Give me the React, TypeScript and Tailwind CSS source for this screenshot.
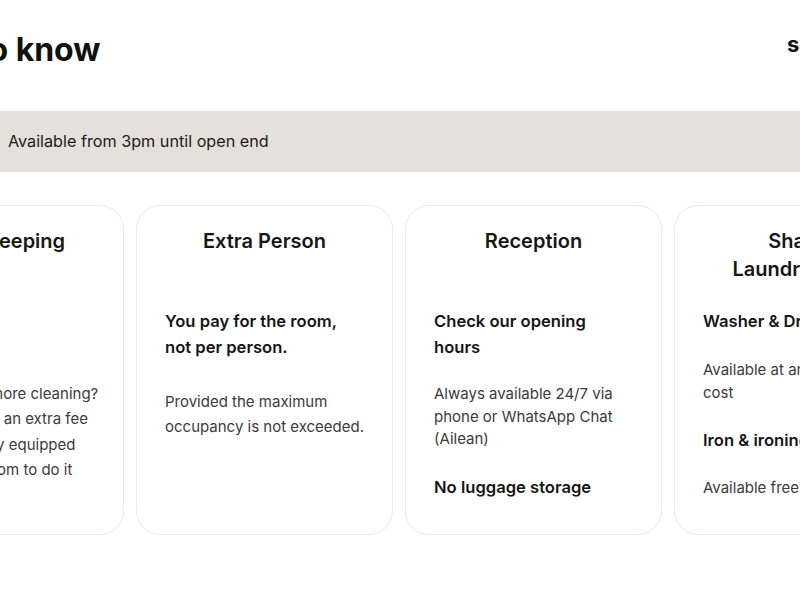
import type { ReactNode } from 'react';

type Block = { kind: 'strong' | 'text'; lines?: string[]; body?: ReactNode; className: string };

type Card = { title: ReactNode; blocks: Block[] };

const cards: Card[] = [
  {
    title: 'Housekeeping',
    blocks: [
      { kind: 'strong', body: 'Included', className: 'leading-[26px]' },
      {
        kind: 'text',
        lines: [
          'Do you need more cleaning?',
          'Available upon an extra fee',
          'Or you are fully equipped',
          'in your own room to do it',
        ],
        className: 'mt-[47px] leading-[25.3px]',
      },
    ],
  },
  {
    title: 'Extra Person',
    blocks: [
      {
        kind: 'strong',
        body: (
          <>
            You pay for the room,
            <br />
            not per person.
          </>
        ),
        className: 'leading-[26px]',
      },
      {
        kind: 'text',
        body: 'Provided the maximum occupancy is not exceeded.',
        className: 'mt-[29px] leading-[25px]',
      },
    ],
  },
  {
    title: 'Reception',
    blocks: [
      {
        kind: 'strong',
        body: (
          <>
            Check our opening
            <br />
            hours
          </>
        ),
        className: 'leading-[26px]',
      },
      {
        kind: 'text',
        body: 'Always available 24/7 via phone or WhatsApp Chat (Ailean)',
        className: 'mt-[23px] leading-[22.5px]',
      },
      { kind: 'strong', body: 'No luggage storage', className: 'mt-[23px] leading-[26px]' },
    ],
  },
  {
    title: (
      <>
        Shared
        <br />
        Laundry Room
      </>
    ),
    blocks: [
      { kind: 'strong', body: 'Washer & Dryer', className: 'leading-[26px]' },
      {
        kind: 'text',
        body: 'Available at an additional cost',
        className: 'mt-[25px] leading-[22.5px]',
      },
      { kind: 'strong', body: 'Iron & ironing board', className: 'mt-[23px] leading-[26px]' },
      { kind: 'text', body: 'Available free of charge', className: 'mt-[24px] leading-[22.5px]' },
    ],
  },
];

function InfoCard({ card }: { card: Card }) {
  return (
    <div className="w-[257px] h-[330px] shrink-0 rounded-[24px] border border-[#ebebeb] bg-white pl-7 pr-6 pt-[21px]">
      <h3 className="h-14 pr-1 text-center text-[20px] font-semibold leading-7 text-[#161616]">{card.title}</h3>
      <div className="mt-[25px]">
        {card.blocks.map((b, i) =>
          b.kind === 'strong' ? (
            <p key={i} className={`text-[16.6px] font-semibold text-[#161616] ${b.className}`}>
              {b.body}
            </p>
          ) : (
            <p key={i} className={`text-[15px] text-[#3b3b3b] ${b.className}`}>
              {b.lines
                ? b.lines.map((l) => (
                    <span key={l} className="block whitespace-nowrap">
                      {l}
                    </span>
                  ))
                : b.body}
            </p>
          ),
        )}
      </div>
    </div>
  );
}

export default function App() {
  return (
    <div className="w-[800px] h-[600px] overflow-hidden bg-white font-['Inter',sans-serif]">
      <div className="ml-[-133px] w-[1300px]">
        {/* Section header */}
        <div className="flex items-start pt-[30px]">
          <h2 className="w-[920px] pl-[19px] text-[32px] font-bold leading-10 text-[#111] whitespace-nowrap">
            Good to know
          </h2>
          <a className="text-[22px] font-bold leading-7 text-[#111]">see all</a>
        </div>

        {/* Check-in banner */}
        <div className="mt-[41px] flex h-[61px] items-center bg-[#e5e0da]">
          <span className="w-[141px] pl-4 text-[16px] font-semibold text-[#161616]">Check-in</span>
          <span className="text-[16.2px] text-[#1c1c1c]">Available from 3pm until open end</span>
        </div>

        {/* Info cards */}
        <div className="mt-[33px] flex gap-3">
          {cards.map((c, i) => (
            <InfoCard key={i} card={c} />
          ))}
        </div>
      </div>
    </div>
  );
}
